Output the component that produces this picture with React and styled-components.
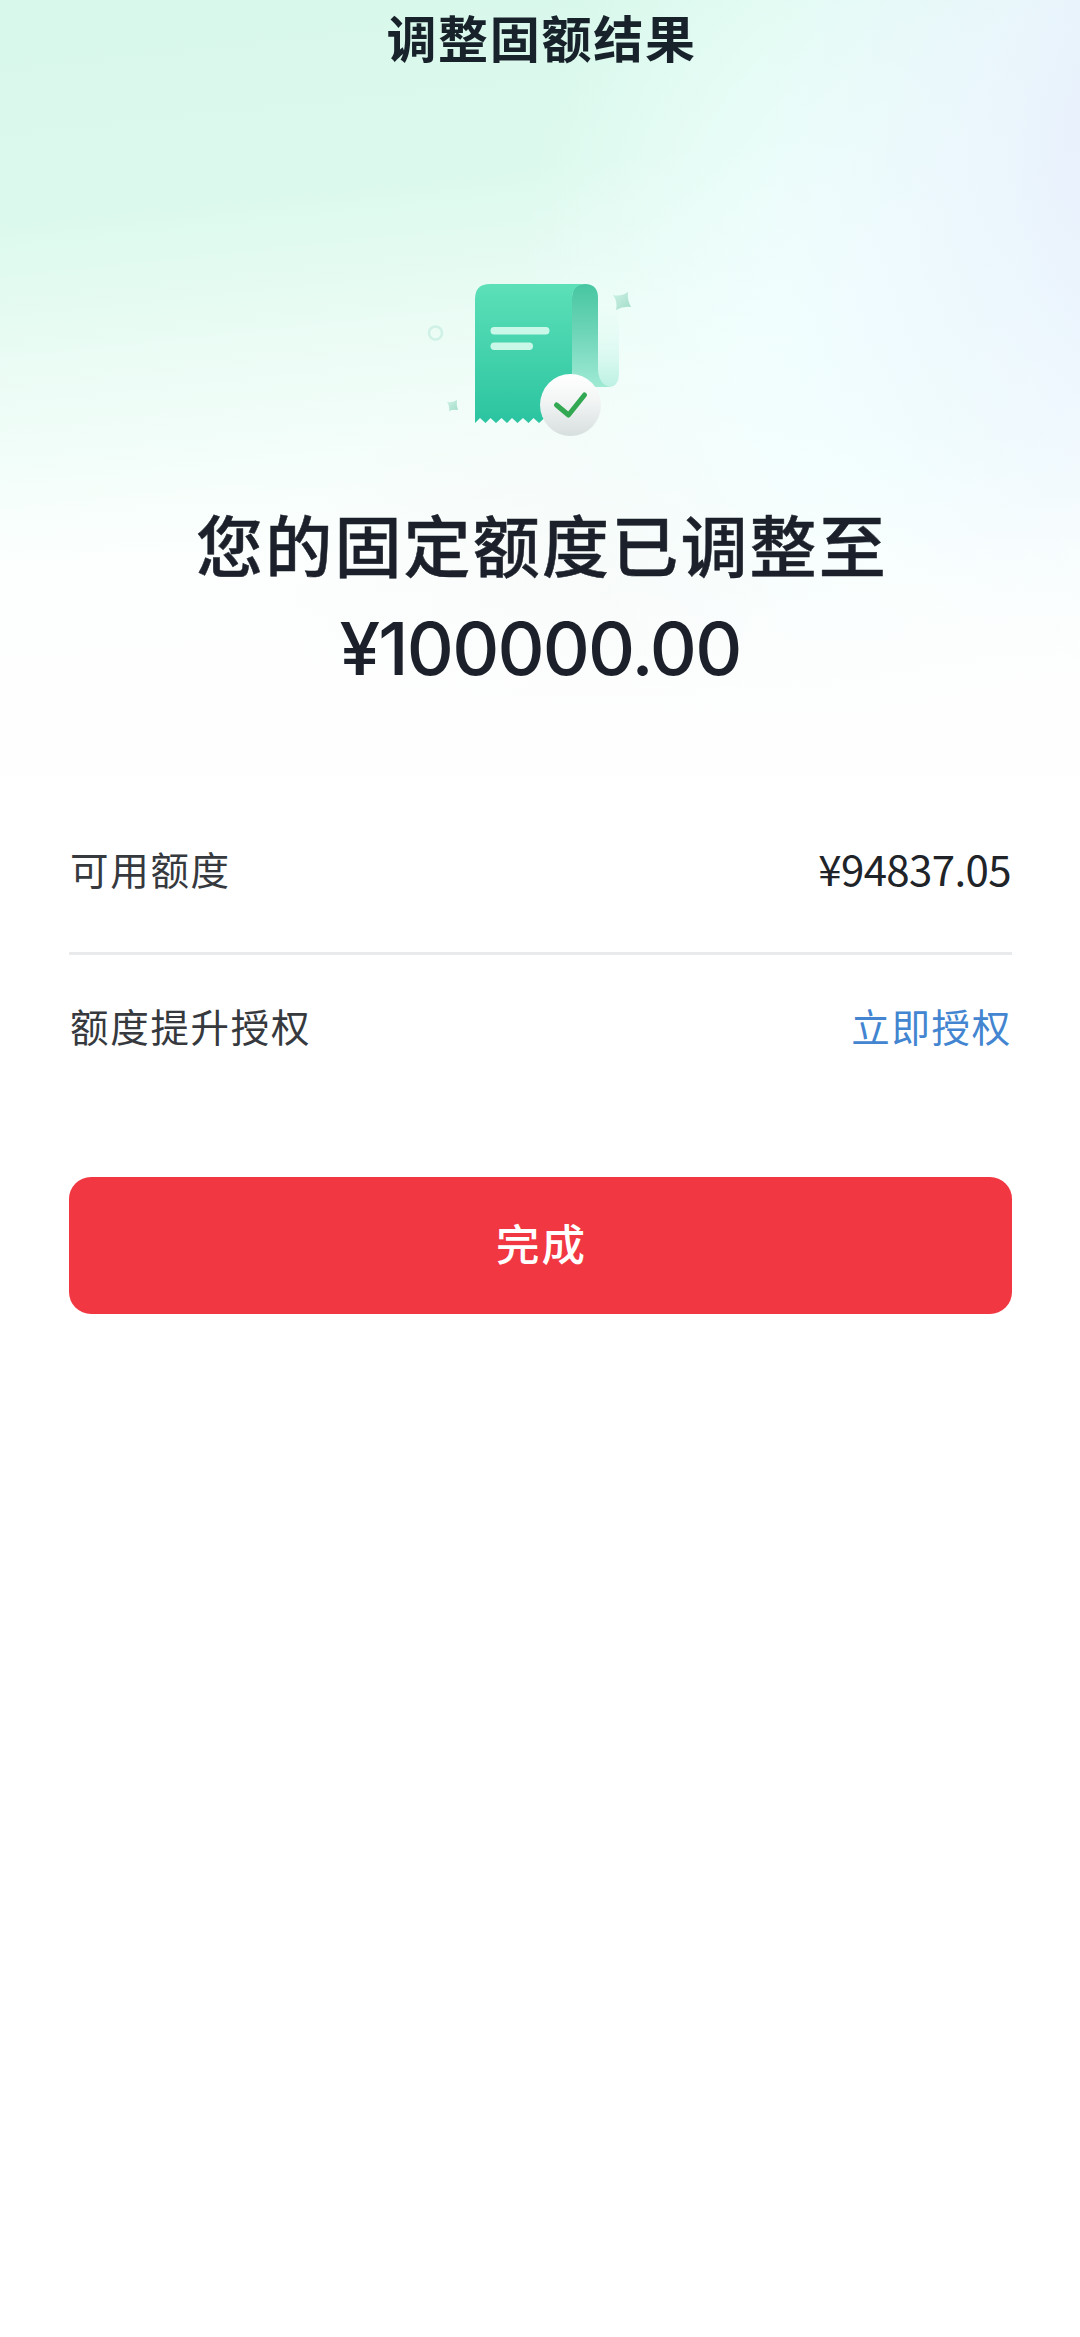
import React from "react";
import styled, { createGlobalStyle } from "styled-components";

const rows = [
  { id: 1, label: "可用额度", value: "¥94837.05" },
  { id: 2, label: "额度提升授权", action: "立即授权" },
];

const ReceiptIcon = () => (
  <svg width="280" height="190" viewBox="0 0 280 190" fill="none">
    <defs>
      <linearGradient id="paper" x1="0" y1="24" x2="0" y2="163" gradientUnits="userSpaceOnUse">
        <stop offset="0" stopColor="#5ce0b8" />
        <stop offset="1" stopColor="#2bc4a0" />
      </linearGradient>
      <linearGradient id="fold" x1="0" y1="24" x2="0" y2="127" gradientUnits="userSpaceOnUse">
        <stop offset="0" stopColor="#47c6a2" />
        <stop offset="0.45" stopColor="#6cd4b7" />
        <stop offset="1" stopColor="#9fead4" />
      </linearGradient>
      <linearGradient id="tail" x1="0" y1="44" x2="0" y2="127" gradientUnits="userSpaceOnUse">
        <stop offset="0" stopColor="#e6fcf5" stopOpacity="0" />
        <stop offset="0.65" stopColor="#d9f9f0" />
        <stop offset="1" stopColor="#bdf1e3" />
      </linearGradient>
      <linearGradient id="badge" x1="0" y1="114" x2="0" y2="176" gradientUnits="userSpaceOnUse">
        <stop offset="0" stopColor="#ffffff" />
        <stop offset="0.4" stopColor="#f4f6f6" />
        <stop offset="1" stopColor="#d7dfde" />
      </linearGradient>
      <linearGradient id="spark" x1="0" y1="0" x2="1" y2="1">
        <stop offset="0" stopColor="#cdf2e5" />
        <stop offset="1" stopColor="#a3dcc9" />
      </linearGradient>
    </defs>
    <path d="M198 44H219V112Q219 127 209 127Q198 126 198 112Z" fill="url(#tail)" />
    <path d="M172 38Q172 24 185 24Q198 24 198 38V108Q198 124 210 127H188Q172 127 172 110Z" fill="url(#fold)" />
    <path
      d="M75 39Q75 24 90 24H185Q172 25 172 39V163L166 158L160.500 163L155 158L150 163L144.500 158L139 163L133.500 158L128.500 163L123 158L117.500 163L112 158L107 163L101.500 158L96 163L90.500 158L85.500 163L80 158L75 163Z"
      fill="url(#paper)"
    />
    <rect x="90.500" y="67" width="59" height="7.500" rx="3.700" fill="#c9f8e9" />
    <rect x="90.500" y="82.500" width="42.500" height="7.500" rx="3.700" fill="#c9f8e9" />
    <ellipse cx="170.500" cy="145" rx="30.500" ry="31" fill="url(#badge)" />
    <path d="M156.500 145L168.500 155L184.500 135" stroke="#31a851" strokeWidth="5" strokeLinecap="round" strokeLinejoin="round" />
    <circle cx="35.500" cy="73" r="6.500" stroke="#cff1e6" strokeWidth="2.600" />
    <path d="M213 35Q221 37 228 32Q227 40 231 47Q223 46 216 50Q218 42 213 35Z" fill="url(#spark)" />
    <path d="M47 142Q52 143 57 140Q56 145 58 150Q53 149 49 151Q50 146 47 142Z" fill="url(#spark)" />
  </svg>
);

const App = () => {
  return (
    <>
      <GlobalStyle />
      <Page>
        <Hero>
          <Title>调整固额结果</Title>
          <ReceiptIcon />
          <Headline>您的固定额度已调整至</Headline>
          <Amount>¥100000.00</Amount>
        </Hero>
        <Content>
          {rows.map((row) => (
            <Row key={row.id}>
              <Label>{row.label}</Label>
              {row.action ? <LinkButton>{row.action}</LinkButton> : <Value>{row.value}</Value>}
            </Row>
          ))}
          <DoneButton>完成</DoneButton>
        </Content>
      </Page>
    </>
  );
};

export default App;

const GlobalStyle = createGlobalStyle`
  * {
    box-sizing: border-box;
  }

  body {
    margin: 0;
    background: #ffffff;
    font-family: "Noto Sans CJK SC", sans-serif;
  }
`;

const Page = styled.div`
  width: 1080px;
  min-height: 2337px;
  background: #ffffff;
`;

const Hero = styled.header`
  display: flex;
  flex-direction: column;
  align-items: center;
  height: 775px;
  background:
    linear-gradient(180deg, rgba(255, 255, 255, 0) 60%, #fefefe 97%),
    radial-gradient(ellipse 400px 560px at 1160px 150px, #e8edfd 0%, rgba(236, 245, 254, 0.75) 45%, rgba(242, 253, 255, 0) 100%),
    radial-gradient(ellipse 340px 520px at 860px 310px, #f1feff 0%, rgba(241, 255, 255, 0.6) 45%, rgba(241, 255, 255, 0) 100%),
    radial-gradient(ellipse 330px 260px at 620px 600px, #f4f9f7 0%, rgba(246, 250, 249, 0) 100%),
    linear-gradient(174deg, #d8f8eb 0%, #dcf9ed 25%, #ebfcf5 42%, #fafffd 64%, #fefefe 100%);
`;

const Title = styled.h1`
  height: 80px;
  margin: 0 0 180px;
  padding-left: 3px;
  color: #17222a;
  font-size: 50px;
  font-weight: 700;
  line-height: 73px;
  letter-spacing: 1.7px;
`;

const Headline = styled.div`
  margin-top: 42px;
  padding-left: 4px;
  color: #1b202a;
  font-size: 67px;
  font-weight: 500;
  line-height: 102px;
  letter-spacing: 2.2px;
  -webkit-text-stroke: 0.5px #1b202a;
`;

const Amount = styled.div`
  margin-top: 3px;
  color: #1b202a;
  font-family: Inter, sans-serif;
  font-size: 73px;
  font-weight: 500;
  line-height: 104px;
  letter-spacing: -1.8px;
`;

const Content = styled.main`
  display: flex;
  flex-direction: column;
  padding: 15px 68px 0 69px;
`;

const Row = styled.div`
  display: flex;
  align-items: center;
  justify-content: space-between;
  height: 162px;
  padding: 0 1px 6px 1px;

  & + & {
    height: 157px;
    padding: 0 0 15px 1px;
    border-top: 3px solid #e9eaeb;
  }
`;

const Label = styled.span`
  color: #36393d;
  font-size: 38.5px;
  line-height: 56px;
  letter-spacing: 1.7px;
`;

const Value = styled.span`
  color: #202428;
  font-size: 42px;
  line-height: 56px;
  letter-spacing: -0.6px;
`;

const LinkButton = styled.button`
  padding: 0;
  border: none;
  background: none;
  color: #4385d0;
  font-family: inherit;
  font-size: 38.5px;
  line-height: 56px;
  letter-spacing: 1.7px;
  cursor: pointer;
`;

const DoneButton = styled.button`
  height: 137px;
  margin-top: 68px;
  padding: 0 0 6px 2px;
  border: none;
  border-radius: 22px;
  background: #f13742;
  color: #ffffff;
  font-family: inherit;
  font-size: 43.5px;
  font-weight: 500;
  letter-spacing: 2px;
  cursor: pointer;

  &:hover {
    opacity: 0.9;
  }
`;
